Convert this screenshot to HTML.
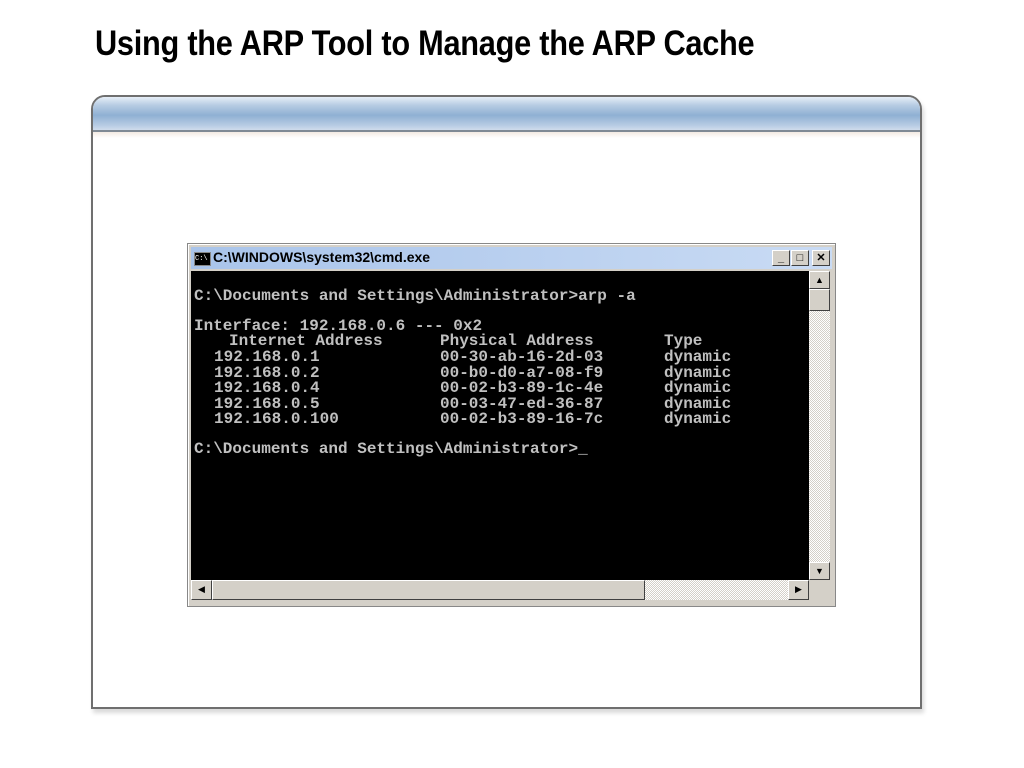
<!DOCTYPE html>
<html><head><meta charset="utf-8"><style>
body{margin:0;width:1024px;height:768px;background:#fff;position:relative;overflow:hidden;font-family:"Liberation Sans",sans-serif}
.title{position:absolute;left:95px;top:24px;font-family:"Liberation Sans",sans-serif;font-weight:bold;font-size:35px;color:#000;white-space:nowrap;letter-spacing:-0.3px;transform:scaleX(0.878);transform-origin:0 0}
.panel{position:absolute;left:91px;top:95px;width:827px;height:610px;border:2px solid #6f6f6f;border-radius:14px 14px 0 0;background:#fff;box-shadow:2px 4px 4px rgba(0,0,0,.15)}
.hdr{position:absolute;left:0;top:0;right:0;height:33px;border-radius:12px 12px 0 0;background:linear-gradient(#e6eef7 0%,#b7cce3 25%,#8fb0d3 55%,#b6cbe3 85%,#cfdcec 100%);border-bottom:2px solid #7f8a95}
.hdr2{position:absolute;left:0;right:0;top:35px;height:6px;background:linear-gradient(#f3ebe3,#fff)}
.win{position:absolute;left:187px;top:243px;width:647px;height:362px;background:#d4d0c8;border:1px solid #888;box-shadow:inset 1px 1px #fff}
.tb{position:absolute;left:3px;top:3px;width:641px;height:22px;background:linear-gradient(90deg,#a9c4ea,#c9dbf4)}
.tb .t{position:absolute;left:22px;top:2px;font-weight:bold;font-size:14px;color:#000}
.ico{position:absolute;left:3px;top:5px;width:15px;height:12px;background:#000;border:1px solid #888;color:#fff;font-size:7px;line-height:12px;font-family:"Liberation Mono",monospace}
.btn{position:absolute;top:3px;width:16px;height:14px;background:#d4d0c8;border:1px solid;border-color:#fff #404040 #404040 #fff;font-size:11px;line-height:14px;text-align:center;font-weight:bold}
.con{position:absolute;left:3px;top:27px;width:618px;height:309px;background:#000;color:#c0c0c0;font-family:"Liberation Mono",monospace;font-size:16px;font-weight:bold;overflow:hidden}
.con div{position:absolute;white-space:pre;line-height:15.5px}
.vs{position:absolute;left:621px;top:27px;width:21px;height:309px;background:repeating-conic-gradient(#fff 0 25%,#d4d0c8 0 50%) 0 0/2px 2px}
.hs{position:absolute;left:3px;top:336px;width:618px;height:20px;background:repeating-conic-gradient(#fff 0 25%,#d4d0c8 0 50%) 0 0/2px 2px}
.sb{position:absolute;background:#d4d0c8;border:1px solid;border-color:#fff #404040 #404040 #fff;box-sizing:border-box;font-size:9px;text-align:center;line-height:16px}
</style></head><body>
<div class="title">Using the ARP Tool to Manage the ARP Cache</div>
<div class="panel"><div class="hdr"></div><div class="hdr2"></div></div>
<div class="win">
<div class="tb"><div class="ico">C:\</div><div class="t">C:\WINDOWS\system32\cmd.exe</div>
<div class="btn" style="left:581px">_</div><div class="btn" style="left:600px">□</div><div class="btn" style="left:621px">✕</div></div>
<div class="con">
<div style="left:3px;top:18px">C:\Documents and Settings\Administrator>arp -a</div>
<div style="left:3px;top:48px">Interface: 192.168.0.6 --- 0x2</div>
<div style="left:38px;top:63px">Internet Address<br></div>
<div style="left:23px;top:79px">192.168.0.1<br>192.168.0.2<br>192.168.0.4<br>192.168.0.5<br>192.168.0.100</div>
<div style="left:249px;top:63px">Physical Address</div>
<div style="left:249px;top:79px">00-30-ab-16-2d-03<br>00-b0-d0-a7-08-f9<br>00-02-b3-89-1c-4e<br>00-03-47-ed-36-87<br>00-02-b3-89-16-7c</div>
<div style="left:473px;top:63px">Type</div>
<div style="left:473px;top:79px">dynamic<br>dynamic<br>dynamic<br>dynamic<br>dynamic</div>
<div style="left:3px;top:171px">C:\Documents and Settings\Administrator>_</div>
</div>
<div class="vs"><div class="sb" style="left:0;top:0;width:21px;height:18px">▲</div><div class="sb" style="left:0;top:18px;width:21px;height:22px"></div><div class="sb" style="left:0;top:291px;width:21px;height:18px">▼</div></div>
<div class="hs"><div class="sb" style="left:0;top:0;width:21px;height:20px">◀</div><div class="sb" style="left:21px;top:0;width:433px;height:20px"></div><div class="sb" style="left:597px;top:0;width:21px;height:20px">▶</div></div>
</div>
</body></html>
